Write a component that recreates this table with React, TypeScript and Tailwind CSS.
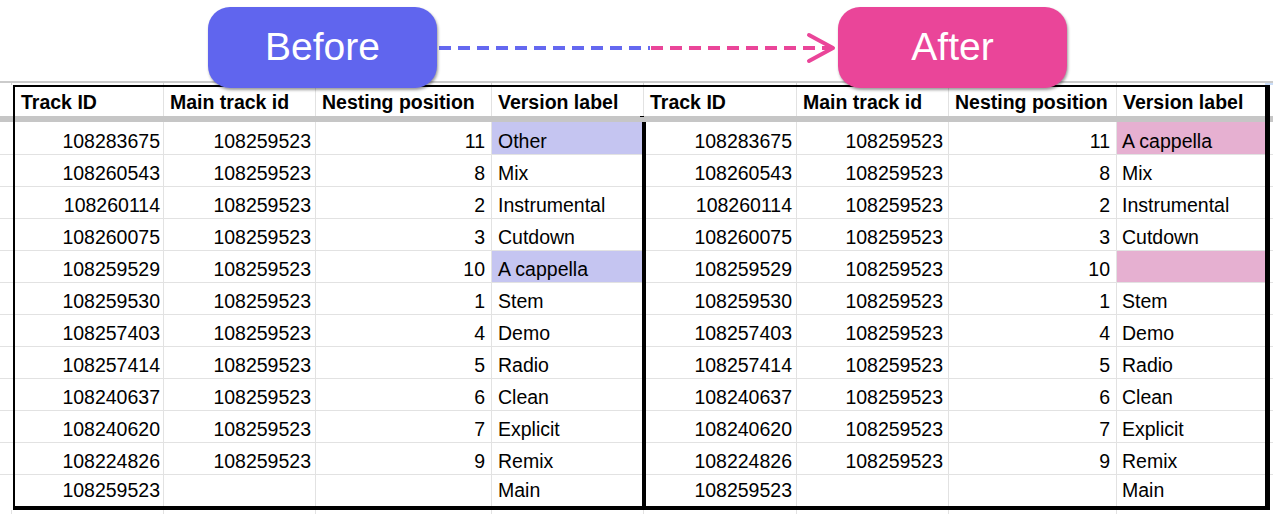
import React from 'react';

type Row = [string, string, string, string];

const beforeRows: Row[] = [
  ['108283675', '108259523', '11', 'Other'],
  ['108260543', '108259523', '8', 'Mix'],
  ['108260114', '108259523', '2', 'Instrumental'],
  ['108260075', '108259523', '3', 'Cutdown'],
  ['108259529', '108259523', '10', 'A cappella'],
  ['108259530', '108259523', '1', 'Stem'],
  ['108257403', '108259523', '4', 'Demo'],
  ['108257414', '108259523', '5', 'Radio'],
  ['108240637', '108259523', '6', 'Clean'],
  ['108240620', '108259523', '7', 'Explicit'],
  ['108224826', '108259523', '9', 'Remix'],
  ['108259523', '', '', 'Main'],
];

// after the fix: "Other" becomes "A cappella", old "A cappella" is emptied
const afterRows: Row[] = beforeRows.map((r, i) =>
  i === 0 ? [r[0], r[1], r[2], 'A cappella'] : i === 4 ? [r[0], r[1], r[2], ''] : r
);

const leftCols = [
  'w-[149px] justify-end pr-[3px] border-r',
  'w-[152px] justify-end pr-[4px] border-r',
  'w-[176px] justify-end pr-[6px] border-r',
  'w-[150px] justify-start pl-[6px]',
];

const rightCols = [
  'w-[151px] justify-end pr-[4px] border-r',
  'w-[152px] justify-end pr-[5px] border-r',
  'w-[168px] justify-end pr-[6px] border-r',
  'w-[148px] justify-start pl-[5px]',
];

const headers = [
  { label: 'Track ID', w: 'w-[149px] border-r' },
  { label: 'Main track id', w: 'w-[152px] border-r' },
  { label: 'Nesting position', w: 'w-[176px] border-r' },
  { label: 'Version label', w: 'w-[152px] border-r' },
  { label: 'Track ID', w: 'w-[153px] border-r' },
  { label: 'Main track id', w: 'w-[152px] border-r' },
  { label: 'Nesting position', w: 'w-[168px] border-r' },
  { label: 'Version label', w: 'w-[148px]' },
];

const rowHeight = (i: number) =>
  i === 0 ? 'h-[33px] border-b' : i === 11 ? 'h-[31px]' : 'h-[32px] border-b';

function Half({ rows, cols, highlight }: { rows: Row[]; cols: string[]; highlight: string }) {
  return (
    <div className="flex flex-col">
      {rows.map((row, i) => (
        <div key={i} className={`flex border-[#e2e2e2] ${rowHeight(i)}`}>
          {row.map((val, c) => (
            <div
              key={c}
              className={`flex items-center border-[#e2e2e2] ${i === 11 ? '' : i === 0 ? 'pt-[8px]' : 'pt-[6px]'} ${cols[c]} ${
                c === 3 && (i === 0 || i === 4) ? highlight : ''
              }`}
            >
              {val}
            </div>
          ))}
        </div>
      ))}
    </div>
  );
}

function Gutter({ w }: { w: string }) {
  return (
    <div className={`flex flex-col ${w}`}>
      {beforeRows.map((_, i) => (
        <div key={i} className={`border-[#e2e2e2] ${rowHeight(i)}`} />
      ))}
    </div>
  );
}

function Pill({ label, className }: { label: string; className: string }) {
  return (
    <div
      className={`absolute z-10 flex h-[81px] w-[229px] items-center justify-center rounded-[22px] text-[39px] text-white shadow-[1px_2px_3px_rgba(0,0,0,0.4)] ${className}`}
    >
      {label}
    </div>
  );
}

export default function App() {
  return (
    <div className="relative h-[514px] w-[1273px] overflow-hidden bg-white font-['Liberation_Sans',Arial,sans-serif] text-[19.5px] text-black">
      <Pill label="Before" className="left-[208px] top-[7px] bg-[#6065ee]" />
      <Pill label="After" className="left-[838px] top-[7px] bg-[#ea4599]" />

      {/* dashed connector */}
      <svg className="absolute left-[437px] top-[28px]" width="402" height="40" viewBox="0 0 402 40">
        <line x1="2" y1="20" x2="213" y2="20" stroke="#6468f0" strokeWidth="4" strokeDasharray="12 7" />
        <line x1="214" y1="20" x2="394" y2="20" stroke="#ea4599" strokeWidth="4" strokeDasharray="12 7" />
        <polyline
          points="372,7 396,20 372,33"
          fill="none"
          stroke="#ea4599"
          strokeWidth="4"
          strokeLinecap="round"
          strokeLinejoin="round"
        />
      </svg>

      <div className="h-[81px]" />
      <div className="h-[2px] bg-[#cbcbcb]" />

      {/* little column ticks above the box */}
      <div className="flex h-[2px]">
        <div className="w-[12px] border-r border-[#d4d4d4]" />
        <div className="w-[3px]" />
        {headers.map((h, i) => (
          <div key={i} className={`${h.w} border-[#d4d4d4]`} />
        ))}
        <div className="flex-1 bg-[#c9dcf7]" />
      </div>

      {/* header */}
      <div className="flex">
        <div className="w-[13px]" />
        <div className="flex w-[1257px] border-l-2 border-r-[5px] border-t-2 border-black">
          {headers.map((h, i) => (
            <div
              key={i}
              className={`flex h-[29px] items-center pl-[6px] pt-[3px] font-bold border-[#e2e2e2] ${h.w}`}
            >
              {h.label}
            </div>
          ))}
        </div>
      </div>

      {/* frozen divider */}
      <div className="flex h-[6px] bg-[#c6c6c6]">
        <div className="w-[13px]" />
        <div className="flex w-[1257px] border-l-2 border-r-[5px] border-black">
          <div className="w-[625px]" />
          <div className="h-[1px] w-[4px] bg-black" />
        </div>
      </div>

      {/* body */}
      <div className="flex">
        <Gutter w="w-[13px]" />
        <div className="flex w-[1257px] border-b-4 border-l-2 border-r-[5px] border-black">
          <Half rows={beforeRows} cols={leftCols} highlight="bg-[#c5c5f1]" />
          <div className="border-l-4 border-black">
            <Half rows={afterRows} cols={rightCols} highlight="bg-[#e6b0d1]" />
          </div>
        </div>
        <Gutter w="flex-1" />
      </div>

      {/* grid continues below */}
      <div className="flex h-[4px]">
        <div className="w-[12px] border-r border-[#e2e2e2]" />
        <div className="w-[3px]" />
        {headers.map((h, i) => (
          <div key={i} className={`${h.w} border-[#e2e2e2]`} />
        ))}
      </div>
    </div>
  );
}
